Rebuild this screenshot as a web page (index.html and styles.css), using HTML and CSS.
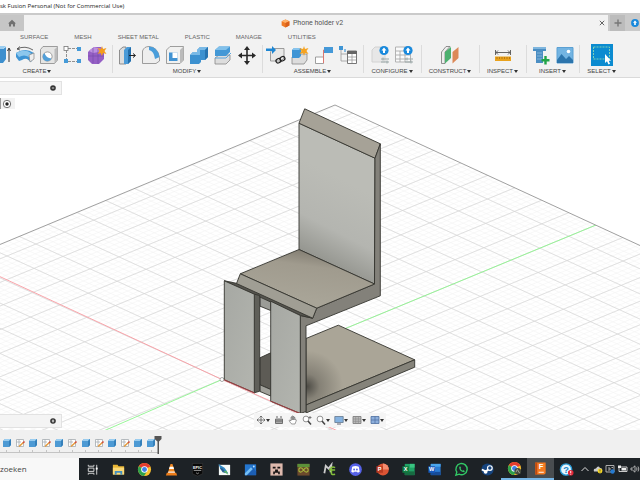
FILE: index.html
```html
<!DOCTYPE html>
<html lang="en">
<head>
<meta charset="utf-8">
<title>Fusion Personal</title>
<link rel="stylesheet" href="styles.css">
</head>
<body>
<svg class="defs" aria-hidden="true">
  <symbol id="solid" viewBox="0 0 10 10"><path d="M1 3L3 1H9V7L7 9H1Z" fill="#4d9ad4"/><path d="M1 3L3 1H9L7 3Z" fill="#9acdf0"/><path d="M7 3L9 1V7L7 9Z" fill="#3580ba"/></symbol>
  <symbol id="sketch" viewBox="0 0 10 10"><path d="M1.500 1.500H8.500V8.500H1.500ZM1.500 4H6M4 1.500V8" fill="#fff" stroke="#a5abb0" stroke-width=".8"/><path d="M4 8.500L9 4" stroke="#e39a3b" stroke-width="1.500"/><path d="M8 5L9.500 3.500" stroke="#d14b40" stroke-width="1.500"/></symbol>
  <symbol id="disc" viewBox="0 0 8 8"><circle cx="4" cy="4" r="2.800" fill="#333"/><path d="M2.800 4H5.200" stroke="#fff" stroke-width=".8"/></symbol>
  <symbol id="chrome" viewBox="0 0 16 16"><circle cx="8" cy="8" r="7" fill="#fbc02d"/><path d="M8 8L2 4.400A7 7 0 0 1 14.200 4.800Z" fill="#e53c2f"/><path d="M8 8L2 4.400A7 7 0 0 0 7.500 15L10.500 10Z" fill="#2da14c"/><circle cx="8" cy="8" r="3.500" fill="#fff"/><circle cx="8" cy="8" r="2.600" fill="#3f7fe8"/></symbol>
</svg>

<header class="titlebar">sk Fusion Personal (Not for Commercial Use)</header>

<nav class="tabbar" aria-label="Documents">
  <button class="home" aria-label="Home"><svg viewBox="0 0 10 10"><path d="M0 5.500L5 .8L10 5.500H8.700V9.500H6.200V6.500H3.800V9.500H1.300V5.500Z" fill="#707070"/></svg></button>
  <div class="doc">
    <div class="doc-name"><svg viewBox="0 0 10 10"><path d="M5 .5L9.300 2.500V7.300L5 9.500L.7 7.300V2.500Z" fill="#ef7a24"/><path d="M5 .5L9.300 2.500L5 4.500L.7 2.500Z" fill="#ffb26b"/><path d="M5 4.500L9.300 2.500V7.300L5 9.500Z" fill="#d9601a"/></svg><span>Phone holder v2</span></div>
    <button class="close" aria-label="Close"><svg viewBox="0 0 6 6"><path d="M.8 .8L5.200 5.200M5.200 .8L.8 5.200" stroke="#555" stroke-width=".9"/></svg></button>
  </div>
  <div class="tab-end">
    <button class="plus" aria-label="New"><svg viewBox="0 0 8 8"><path d="M4 .5V7.500M.5 4H7.500" stroke="#777" stroke-width="1.400"/></svg></button>
    <button class="ext" aria-label="Extensions"><svg viewBox="0 0 8 8"><circle cx="4" cy="4" r="3.900" fill="#1989dc"/><path d="M4 1.500L6 3.700H4.800V6H3.200V3.700H2Z" fill="#fff"/></svg></button>
  </div>
</nav>

<section class="ribbon">
  <div class="modes"><a href="#">SURFACE</a><a href="#">MESH</a><a href="#">SHEET METAL</a><a href="#">PLASTIC</a><a href="#">MANAGE</a><a href="#">UTILITIES</a></div>
  <div class="groups">
    <div class="group create">
      <div class="icons">
        <button aria-label="Extrude"><svg viewBox="0 0 20 20"><path d="M0 4H12L15 2V14L12 18H0Z" fill="#3d8fce"/><path d="M0 4L3 1H15L12 4Z" fill="#9acdf0"/><path d="M18 17V4M16.500 6L18 3L19.500 6" fill="none" stroke="#333"/></svg></button>
        <button aria-label="Revolve"><svg viewBox="0 0 20 20"><path d="M1 8Q10 2 19 8V12L16 17L12 14Q10 13 7 15L4 16L1 12Z" fill="#3e94d4"/><path d="M1 8Q10 3 16 8L14 12Q9 9 4 12Z" fill="#8cc7ed"/><path d="M14 10L19 8V14L15 17Z" fill="#eee" stroke="#888" stroke-width=".7"/><path d="M2 4Q10 0 18 5M2 4L5 1.500M2 4L5 5" fill="none" stroke="#444" stroke-width=".8"/></svg></button>
        <button aria-label="Hole"><svg viewBox="0 0 20 20"><path d="M1.500 4.500L4 1.500H18.500V15L15.500 18.500H1.500Z" fill="#e5e5e4" stroke="#888" stroke-width=".8"/><path d="M15.500 4.500L18.500 1.500V15L15.500 18.500Z" fill="#bbb"/><circle cx="8.500" cy="11.500" r="4.600" fill="#fff" stroke="#888" stroke-width=".8"/><path d="M5.500 8A4.600 4.600 0 1 0 12.500 13.500Q7 13 5.500 8Z" fill="#529fd8"/></svg></button>
        <button aria-label="Pattern"><svg viewBox="0 0 20 20"><path d="M5 3.500H14M3.500 5V15M5 16.500H14" stroke="#777" stroke-width=".8" stroke-dasharray="3 1"/><rect x="1" y="1.500" width="4" height="4" fill="#fff" stroke="#777" stroke-width=".8"/><path d="M14 2H18V6H14ZM14 14H18V18H14ZM1 14H5V18H1Z" fill="#459bd9"/></svg></button>
        <button aria-label="Form"><svg viewBox="0 0 20 20"><path d="M3 5L7 2H14L17 5V14L12 19H5L1 15V7Z" fill="#955fc5"/><path d="M2 6L7 2L15 4L12 7L6 8Z" fill="#bd91df"/><path d="M6 3V18M11 4V19M1 11H17" stroke="#744aa8" stroke-width=".6"/><path d="M15 1L16 4L19.500 3L17.500 6L19.500 9L16 8L15 11L13.500 8L10.500 9L12.500 6L10.500 3L14 4Z" fill="#f39c1e"/></svg></button>
      </div>
      <button class="menu">CREATE<i></i></button>
    </div>
    <div class="group modify">
      <div class="icons">
        <button aria-label="Press pull"><svg viewBox="0 0 20 20"><path d="M2.500 5L6 2H9V19H2.500Z" fill="#ddd" stroke="#777" stroke-width=".8"/><path d="M7 5L10 2H14V16L11 19H7Z" fill="#4a9bd8"/><path d="M11 5L14 2V16L11 19Z" fill="#236eab"/><path d="M12 10.500H18M16 8.500L18.500 10.500L16 12.500" fill="none" stroke="#222"/></svg></button>
        <button aria-label="Fillet"><svg viewBox="0 0 20 20"><path d="M1.500 18.500V6Q3 1.500 8 1.500Q17 2 18.500 13V16L15 18.500Z" fill="#eee" stroke="#888" stroke-width=".8"/><path d="M8 1.500Q17 2 18.500 12L14 14Q13 6 8 5Z" fill="#4a9edb"/></svg></button>
        <button aria-label="Shell"><svg viewBox="0 0 20 20"><path d="M1.500 5L5 1.500H18.500V15L15 18.500H1.500Z" fill="#f1f1f0" stroke="#888" stroke-width=".8"/><path d="M15 5L18.500 1.500V15L15 18.500Z" fill="#bbb"/><path d="M4 7.500H12.500V16H4Z" fill="#4193d3"/><path d="M7.500 7.500H12.500V13H7.500Z" fill="#fff"/></svg></button>
        <button aria-label="Combine"><svg viewBox="0 0 20 20"><path d="M1 10L4 7H8V5L11 2H19V12L16 15H12V17L10 19H1Z" fill="#3c91d0"/><path d="M1 10L4 7H8V5L11 2H19L16 5H11V10Z" fill="#79b9e6"/><path d="M16 5L19 2V12L16 15Z" fill="#2673b0"/></svg></button>
        <button aria-label="Offset face"><svg viewBox="0 0 20 20"><path d="M2 13L6 10H17V15L13 19H2Z" fill="#ddd" stroke="#888" stroke-width=".8"/><path d="M2 5L6 1.500H17V7L13 11H2Z" fill="#4398d6"/><path d="M2 5L6 1.500H17L13 5Z" fill="#82c1eb"/><path d="M2 13H13L18 8" fill="none" stroke="#5aa5dc"/></svg></button>
        <button aria-label="Move"><svg viewBox="0 0 20 20"><path d="M10 3V18M2.500 10.500H17.500" stroke="#292929" stroke-width="1.600"/><path d="M10 1L13 5H7ZM10 20L13 16H7ZM1 10.500L5 7.500V13.500ZM19 10.500L15 7.500V13.500Z" fill="#292929"/></svg></button>
      </div>
      <button class="menu">MODIFY<i></i></button>
    </div>
    <div class="group assemble">
      <div class="icons">
        <button aria-label="Insert component"><svg viewBox="0 0 20 20"><path d="M4.500 7L7 3.500H18V13L15 16H4.500Z" fill="#e8e8e7" stroke="#888" stroke-width=".8"/><path d="M0 3.500H6V1L10 5L6 9V6H0Z" fill="#1e86d2"/><rect x="10" y="14" width="5" height="4" rx="2" fill="none" stroke="#222" stroke-width="1.300" transform="rotate(-30 12 16)"/><rect x="14" y="12" width="5" height="4" rx="2" fill="none" stroke="#222" stroke-width="1.300" transform="rotate(-30 16 14)"/></svg></button>
        <button aria-label="New component"><svg viewBox="0 0 20 20"><path d="M2 12L5 9H17V15L14 19H2Z" fill="#ddd" stroke="#888" stroke-width=".8"/><path d="M2 5L4 3H11V11L9 13H2Z" fill="#3f95d5"/><path d="M2 5L4 3H11L9 5Z" fill="#87c4ed"/><path d="M14 1L15 4L18.500 3L16.500 6L18.500 9L15 8L14 11L13 8L9.500 9L11.500 6L9.500 3L13 4Z" fill="#f5a321"/></svg></button>
        <button aria-label="Joint"><svg viewBox="0 0 20 20"><path d="M1.500 12H9.500V18.500H1.500Z" fill="#fff" stroke="#888" stroke-width=".8"/><path d="M9.500 18V5H13" fill="none" stroke="#dc7770"/><path d="M10 2H19V8H10Z" fill="#4599d8"/></svg></button>
        <button aria-label="Bill of materials"><svg viewBox="0 0 20 20"><path d="M3 5V16H9M3 9H9" fill="none" stroke="#999" stroke-width=".8"/><path d="M1 1H5V5H1Z" fill="#3f95d5"/><path d="M6 4H8V7H6Z" fill="#8abbe0"/><path d="M9.500 6H18.500V18.500H9.500Z" fill="#fff" stroke="#777"/><path d="M9 6H19V9H9Z" fill="#666"/><path d="M10 12H18M10 15H18M14 9V18" stroke="#999" stroke-width=".8"/></svg></button>
      </div>
      <button class="menu">ASSEMBLE<i></i></button>
    </div>
    <div class="group">
      <div class="icons">
        <button aria-label="Configure"><svg viewBox="0 0 20 20"><path d="M2 5L5 2H15V17H2Z" fill="#e7e7e7" stroke="#d2d2d2"/><circle cx="14" cy="5.500" r="4.600" fill="#1989dc"/><path d="M14 2.500L16.500 5.500H15V8H13V5.500H11.500Z" fill="#fff"/><path d="M11 14H19M11 17H19M13 12.500V15.500M17 15.500V18.500" stroke="#9ba8a8"/></svg></button>
        <button aria-label="Table"><svg viewBox="0 0 20 20"><path d="M1.500 2H16.500V17H1.500ZM2 6H16M2 10H16M2 14H12M6 6V17M11 6V17" fill="#fafafa" stroke="#aaa" stroke-width=".9"/><circle cx="14" cy="5.500" r="4.600" fill="#1989dc"/><path d="M14 2.500L16.500 5.500H15V8H13V5.500H11.500Z" fill="#fff"/><path d="M11 14H19M11 17H19M13 12.500V15.500M17 15.500V18.500" stroke="#9ba8a8"/></svg></button>
      </div>
      <button class="menu">CONFIGURE<i></i></button>
    </div>
    <div class="group">
      <div class="icons"><button aria-label="Plane"><svg viewBox="0 0 20 20"><path d="M1.500 7L6 1.500H10L5 7V18.500H1.500Z" fill="#eee" stroke="#777" stroke-width=".8"/><path d="M5 7L11 2V13L5 18.500Z" fill="#4cb06f"/><path d="M12.500 7L18.500 2V13L12.500 18.500Z" fill="#dc8957"/></svg></button></div>
      <button class="menu">CONSTRUCT<i></i></button>
    </div>
    <div class="group">
      <div class="icons"><button aria-label="Measure"><svg viewBox="0 0 20 20"><path d="M2.500 5V10M17.500 5V10M3 7.500H17M5 5.500L3 7.500L5 9.500M15 5.500L17 7.500L15 9.500" fill="none" stroke="#555" stroke-width=".9"/><path d="M2 11.500H18V16H2Z" fill="#e9a21d"/><path d="M4 12V14M6.500 12V14M9 12V14M11.500 12V14M14 12V14M16.500 12V14" stroke="#a8690a" stroke-width=".7"/></svg></button></div>
      <button class="menu">INSPECT<i></i></button>
    </div>
    <div class="group">
      <div class="icons">
        <button aria-label="Insert fastener"><svg viewBox="0 0 20 20"><path d="M2 2H15V6H12V18H5V6H2Z" fill="#4b8ec3"/><path d="M2 2H15V4H2Z" fill="#7fb6de"/><path d="M6 8H11M6 11H11M6 14H11" stroke="#83b4d8"/><path d="M14.500 11V19.500M10.500 15.200H18.500" stroke="#20a447" stroke-width="2.400"/></svg></button>
        <button aria-label="Canvas"><svg viewBox="0 0 20 20"><path d="M2 2.500H18V18H2Z" fill="#73b4e2" stroke="#5ba0d3"/><path d="M2 15L6.500 9L11 14L14 11L18 15V18H2Z" fill="#2c75ad"/><circle cx="13.500" cy="6.500" r="1.800" fill="#fff"/></svg></button>
      </div>
      <button class="menu">INSERT<i></i></button>
    </div>
    <div class="group select">
      <div class="icons"><button class="active" aria-label="Select"><svg viewBox="0 0 22 22"><path d="M0 0H22V22H0Z" fill="#0b8bd0"/><path d="M2.500 3H18.500V15H2.500Z" fill="none" stroke="#7cd0b5" stroke-dasharray="2 1"/><path d="M14 10V19L16 17.200L17.500 20.500L19 19.800L17.700 16.700H20Z" fill="#fff"/></svg></button></div>
      <button class="menu">SELECT<i></i></button>
    </div>
  </div>
</section>

<main class="canvas">
  <svg class="scene" viewBox="0 77 640 353" preserveAspectRatio="xMidYMid slice" role="img" aria-label="Phone holder model">
    <defs>
      <clipPath id="floor"><path d="M335 104.500L-100 285.600V520H760V300.300Z"/></clipPath>
      <linearGradient id="back" x1=".58" y1=".35" x2=".42" y2="1"><stop offset="0" stop-color="#bbbcb6"/><stop offset=".5" stop-color="#b4b5b0"/><stop offset=".82" stop-color="#969791"/><stop offset="1" stop-color="#aaaba7"/></linearGradient>
      <linearGradient id="seat" x1=".6" y1="0" x2=".35" y2=".8"><stop offset="0" stop-color="#7e796e"/><stop offset=".35" stop-color="#a09b8e"/><stop offset="1" stop-color="#a8a497"/></linearGradient>
      <radialGradient id="shade" gradientUnits="userSpaceOnUse" cx="307" cy="386" r="36"><stop offset="0" stop-color="#4d4b45"/><stop offset=".35" stop-color="#858176"/><stop offset="1" stop-color="#aaa597"/></radialGradient>
      <linearGradient id="leg" x1="0" y1="0" x2="1" y2="1"><stop offset="0" stop-color="#a6a8a3"/><stop offset="1" stop-color="#b3b5af"/></linearGradient>
    </defs>
    <g clip-path="url(#floor)" fill="none">
      <path id="minor" class="minor"/>
      <path id="major" class="major"/>
      <path d="M-78 240L222 379L402 459" stroke="#f99ba1" stroke-width=".9"/>
      <path d="M596 224.500L222 379L22 466" stroke="#8df58d" stroke-width=".9"/>
    </g>
    <path d="M-100 285.600L335 104.500L760 300.300" fill="none" stroke="#888" stroke-width=".8"/>
    <circle cx="222" cy="379" r="2" fill="#fff" stroke="#888" stroke-width=".7"/>
    <g stroke="#34342f" stroke-width=".9" stroke-linejoin="round">
      <path d="M306 338L338.300 324.700L414.700 359.300L306 404.500Z" fill="url(#shade)"/>
      <path d="M306 404.500L414.700 359.300V366.700L306 412.500Z" fill="#85837a"/>
      <path d="M260 357.300L270.700 352.300V389L260 384.300Z" fill="#5d5b55"/>
      <path d="M260 384.300L270.700 389V395.500L260 391Z" fill="#a1a19b"/>
      <path d="M260 295L270.700 299V310L260 305.700Z" fill="#9b9c97"/>
      <path d="M299 122.700L375 157.700L374.500 283.500L299 249Z" fill="url(#back)"/>
      <path d="M304.700 108.300L380.300 143.300L375 157.700L299 122.700Z" fill="#a6a297"/>
      <path d="M380.300 143.300L375 157.700L374.500 283.500L316.700 307.700L312.700 317.700L300.300 315V413L306 411V325.300L380.300 295.300Z" fill="#83817a"/>
      <path d="M299 249L374.500 283.500L316.700 307.700L240.300 273.300Z" fill="url(#seat)"/>
      <path d="M224.300 280.300L240 283.500L312.700 317.700L300.300 315Z" fill="#55544e"/>
      <path d="M240.300 273.300L316.700 307.700L312.700 317.700L236.500 283Z" fill="#a09e94"/>
      <path d="M254.300 293.700L259.700 295V390.700L254.300 392.300Z" fill="#5f5f59"/>
      <path d="M224.300 280.300L254.300 293.700V392.300L224.300 379.300Z" fill="url(#leg)"/>
      <path d="M270.700 300.700L300.300 315V413L270.700 400.700Z" fill="url(#leg)"/>
      <path d="M224.300 379.300L254.300 392.300M270.700 400.700L300.300 413" stroke="#a53c40"/>
    </g>
  </svg>

  <div class="panel top"><button aria-label="Collapse browser"><svg viewBox="0 0 8 8"><use href="#disc"/></svg></button></div>
  <div class="eye"><button aria-label="Visibility"><svg viewBox="0 0 10 10"><circle cx="5" cy="5" r="3.700" fill="#fff" stroke="#666" stroke-width=".9"/><circle cx="5" cy="5" r="1.700" fill="#222"/></svg></button></div>
  <div class="panel bottom"><button aria-label="Add comment"><svg viewBox="0 0 8 8"><use href="#disc"/><path d="M4 2.500V5.500" stroke="#fff" stroke-width=".8"/></svg></button></div>

  <div class="navbar">
    <button class="drop" aria-label="Orbit"><svg viewBox="0 0 10 10"><path d="M5 1V9M1 5H9M3.500 2.500L5 1L6.500 2.500M3.500 7.500L5 9L6.500 7.500M2.500 3.500L1 5L2.500 6.500M7.500 3.500L9 5L7.500 6.500" fill="none" stroke="#666" stroke-width=".9"/></svg><i></i></button>
    <button aria-label="Look at"><svg viewBox="0 0 10 10"><path d="M1.500 4H8.500V8.500H1.500Z" fill="#aaa" stroke="#666" stroke-width=".9"/><path d="M2 2H4M6 2H8M1 6H9" stroke="#666"/></svg></button>
    <button aria-label="Pan"><svg viewBox="0 0 10 10"><path d="M3 8.500L1 5.500L2 5L3 6V2L4 2V5V1H5V5V1.500H6V5V2.500H7V5L8 4.500L8.500 5L7 9H4Z" fill="#fff" stroke="#777" stroke-width=".7"/></svg></button>
    <button aria-label="Zoom"><svg viewBox="0 0 10 10"><circle cx="4" cy="4" r="2.900" fill="#fff" stroke="#777" stroke-width=".8"/><path d="M6 6L9 9.500" stroke="#444" stroke-width="1.500"/><path d="M8 1V4M6.500 2.500H9.500" stroke="#555" stroke-width=".7"/></svg></button>
    <button class="drop" aria-label="Fit"><svg viewBox="0 0 10 10"><circle cx="4" cy="4" r="2.900" fill="#fff" stroke="#777" stroke-width=".8"/><path d="M6 6L9 9.500" stroke="#444" stroke-width="1.500"/></svg><i></i></button>
    <button class="drop" aria-label="Display"><svg viewBox="0 0 10 10"><path d="M.8 1.500H9.200V7.500H.8Z" fill="#85b2e0" stroke="#65798e" stroke-width=".8"/><path d="M3 9H7" stroke="#667"/></svg><i></i></button>
    <button class="drop" aria-label="Grid"><svg viewBox="0 0 10 10"><path d="M1 1.500H9V8.500H1Z" fill="#bbb" stroke="#777" stroke-width=".8"/><path d="M1 4H9M1 6.300H9M3.700 1.500V8.500M6.400 1.500V8.500" stroke="#888" stroke-width=".6"/></svg><i></i></button>
    <button class="drop" aria-label="Viewports"><svg viewBox="0 0 10 10"><path d="M1 1.500H9V8.500H1Z" fill="#8caedb" stroke="#4e6fa0" stroke-width=".8"/><path d="M5 1.500V8.500M1 5H9" stroke="#4e6fa0" stroke-width=".7"/></svg><i></i></button>
  </div>
</main>

<section class="timeline" aria-label="Timeline">
  <div class="steps">
    <button aria-label="Extrude 1"><svg><use href="#solid"/></svg></button><button aria-label="Sketch 2"><svg><use href="#sketch"/></svg></button>
    <button aria-label="Extrude 2"><svg><use href="#solid"/></svg></button><button aria-label="Sketch 3"><svg><use href="#sketch"/></svg></button>
    <button aria-label="Extrude 3"><svg><use href="#solid"/></svg></button><button aria-label="Sketch 4"><svg><use href="#sketch"/></svg></button>
    <button aria-label="Extrude 4"><svg><use href="#solid"/></svg></button><button aria-label="Sketch 5"><svg><use href="#sketch"/></svg></button>
    <button aria-label="Extrude 5"><svg><use href="#solid"/></svg></button><button aria-label="Sketch 6"><svg><use href="#sketch"/></svg></button>
    <button aria-label="Extrude 6"><svg><use href="#solid"/></svg></button><button aria-label="Extrude 7"><svg><use href="#solid"/></svg></button>
  </div>
  <svg class="marker" viewBox="0 0 8 18"><path d="M.5 0H7.500V3L5 5.500V18H3.500V5.500L.5 3Z" fill="#555"/></svg>
</section>

<footer class="taskbar">
  <button class="search">zoeken</button>
  <div class="apps">
    <button aria-label="Task view"><svg viewBox="0 0 16 16"><path d="M3.500 3V4.500H9.500V3M3.500 6.500H9.500V10H3.500ZM3.500 13.500V12H9.500V13.500M12.500 3V13.500" fill="none" stroke="#ddd"/><path d="M11.500 6H13.500V8H11.500Z" fill="#fff"/></svg></button>
    <button aria-label="Explorer"><svg viewBox="0 0 16 16"><path d="M2 3H7L8 4.500H14V13H2Z" fill="#e9b634"/><path d="M2 6H14V13.500H2Z" fill="#fbd976"/><path d="M4 13.500V9.500H12V13.500H10V11.500H6V13.500Z" fill="#438fc0"/></svg></button>
    <button aria-label="Chrome"><svg><use href="#chrome"/></svg></button>
    <button aria-label="VLC"><svg viewBox="0 0 16 16"><path d="M7 2H9L12 12H4Z" fill="#f28a22"/><path d="M6 5H10L10.700 7.500H5.300Z" fill="#fff"/><path d="M4.700 10H11.300L12 12H4Z" fill="#eee"/><path d="M3 11.500H13L14 14.500H2Z" fill="#ee7d18"/></svg></button>
    <button aria-label="Epic Games"><svg viewBox="0 0 16 16"><path d="M2.500 1.500H13.500V12.500L8 15L2.500 12.500Z" fill="#080808" stroke="#444" stroke-width=".5"/><text x="8" y="7.500" class="epic">EPIC</text><path d="M4 9H12M6.500 11.500L8 12.500L9.500 11.500" stroke="#bbb" stroke-width=".8" fill="none"/></svg></button>
    <button aria-label="Draw"><svg viewBox="0 0 16 16"><path d="M2 3H14V14H2Z" fill="#f5faf8"/><path d="M1.500 2L8 6L12 12L8 11L4 8Z" fill="#3189c5"/><path d="M3 6L6 11L10 12L6 7Z" fill="#285d91"/><path d="M7 10L12 13.500L10 9Z" fill="#5bb267"/></svg></button>
    <button aria-label="Photos"><svg viewBox="0 0 16 16"><path d="M2 2.500H14V14H2Z" fill="#2476ce"/><path d="M2 14L9 6Q10 5.500 11 6.500L14 10V14Z" fill="#1c5fb4"/><path d="M2 12L8.500 5.500L10.500 7.500L4 14H2Z" fill="#73bef4"/><circle cx="11.500" cy="4.800" r="1" fill="#bfe3ff"/></svg></button>
    <button aria-label="Minecraft"><svg viewBox="0 0 16 16"><path d="M1.500 1.500H14.500V14.500H1.500Z" fill="#ddb9ad"/><path d="M4 5H7V7H4ZM9 5H12V7H9ZM6.500 8H9.500V10H11.500V13H9.800V11.500H6.200V13H4.500V10H6.500Z" fill="#171313"/></svg></button>
    <button aria-label="Launcher"><svg viewBox="0 0 16 16"><path d="M1.500 2H14.500V14.500H1.500Z" fill="#6c4a2c"/><path d="M1.500 2H14.500V5.500H1.500Z" fill="#5c9139"/><path d="M8 8.500C5 4.500 3 6.500 3 8.500S5 12.500 8 8.500S13 6.500 13 8.500S11 12.500 8 8.500Z" fill="none" stroke="#a6b83c" stroke-width="1.200"/></svg></button>
    <button aria-label="MCreator"><svg viewBox="0 0 16 16"><path d="M2.500 12L4 4L7 7L10 3L9 11" fill="none" stroke="#ccc" stroke-width="1.900"/><path d="M10 5V12Q10 14 14 13M7.500 8.500H14M14 6Q10 4 9 8" fill="none" stroke="#83bd3c" stroke-width="1.700"/></svg></button>
    <button aria-label="Discord"><svg viewBox="0 0 16 16"><circle cx="8" cy="8" r="6.800" fill="#5662e8"/><path d="M4.500 5Q8 3.500 11.500 5L12.500 10.500L10.500 11.500L9.700 10.500H6.300L5.500 11.500L3.500 10.500Z" fill="#fff"/><circle cx="6.500" cy="8" r="1" fill="#5662e8"/><circle cx="9.500" cy="8" r="1" fill="#5662e8"/></svg></button>
    <button aria-label="PowerPoint"><svg viewBox="0 0 16 16"><circle cx="8.500" cy="8" r="6.300" fill="#db5434"/><path d="M8.500 1.700A6.300 6.300 0 0 1 14.800 8H8.500Z" fill="#f48c6e"/><path d="M1.500 4.500H8.500V11.500H1.500Z" fill="#b93a20"/><text x="5" y="10" class="app-letter">P</text></svg></button>
    <button aria-label="Excel"><svg viewBox="0 0 16 16"><path d="M4 2H14.500V14H4Z" fill="#20a366"/><path d="M9.500 2H14.500V6H9.500Z" fill="#39c481"/><path d="M4 10H14.500V14H4Z" fill="#176c42"/><path d="M1.500 4.500H8.500V11.500H1.500Z" fill="#107c41"/><text x="5" y="10" class="app-letter">X</text></svg></button>
    <button aria-label="Word"><svg viewBox="0 0 16 16"><path d="M4 2H14.500V14H4Z" fill="#2b7cd3"/><path d="M4 2H14.500V5H4Z" fill="#4aa5ed"/><path d="M4 10.500H14.500V14H4Z" fill="#164b96"/><path d="M1.500 4.500H8.500V11.500H1.500Z" fill="#185abd"/><text x="5" y="10" class="app-letter">W</text></svg></button>
    <button aria-label="WhatsApp"><svg viewBox="0 0 16 16"><path d="M2 14L3 10.800A6 6 0 1 1 5.500 13Z" fill="#1d2329" stroke="#32c765" stroke-width="1.500"/><path d="M5.500 5Q5.500 10.500 11 11L11.500 9.500L9.700 8.500L9 9.300Q7.500 8.500 7 7.200L7.600 6.500L6.800 4.700Z" fill="#32c765"/></svg></button>
    <button aria-label="Steam"><svg viewBox="0 0 16 16"><circle cx="8" cy="8" r="6.500" fill="#15437d"/><path d="M2 8L6 10L9 8" stroke="#fff" stroke-width="2" fill="none"/><circle cx="10.500" cy="6.500" r="2.500" fill="#15437d" stroke="#fff" stroke-width="1.300"/><circle cx="6" cy="10.500" r="2" fill="#fff"/></svg></button>
    <button class="running" aria-label="Chrome profile"><svg viewBox="0 0 16 16"><use href="#chrome"/><circle cx="11.500" cy="11" r="3.500" fill="#444b3e"/><path d="M9.500 12L11 9L13.500 13" stroke="#a5aa96" fill="none"/></svg></button>
    <button class="running current" aria-label="Fusion"><svg viewBox="0 0 16 16"><path d="M2.500 1.500H13.500V13L12 14.500H2.500Z" fill="#f47a20"/><path d="M2.500 1.500H4.500V14.500H2.500Z" fill="#bd4a12"/><text x="8.500" y="9" class="fusion">F</text><path d="M6 12H11.500" stroke="#fff"/></svg></button>
    <button aria-label="Help"><svg viewBox="0 0 16 16"><circle cx="7.500" cy="8" r="6" fill="#e7f5fc" stroke="#299bd8" stroke-width="1.500"/><text x="7.500" y="11.500" class="help">?</text><circle cx="12.500" cy="11.500" r="3" fill="#e32636"/><path d="M12.500 9.500V12M12.500 12.700V13.500" stroke="#fff"/></svg></button>
  </div>
  <div class="tray">
    <button aria-label="Show hidden"><svg viewBox="0 0 10 10"><path d="M1.500 7L5 3.500L8.500 7" fill="none" stroke="#ddd"/></svg></button>
    <button aria-label="OneDrive"><svg viewBox="0 0 10 10"><path d="M1 7.500Q0 4.500 3 4.500Q5 1 7 4Q10 4 9 7.500Z" fill="#ccc"/><circle cx="7" cy="7" r="2.400" fill="#f4d724"/><path d="M7 5.500V7.300M7 7.800V8.500" stroke="#333" stroke-width=".7"/></svg></button>
    <button aria-label="Security"><svg viewBox="0 0 10 10"><path d="M1 1.500H9V8H1ZM3 4H5V6H3M6.500 3.500H8" fill="none" stroke="#bbb" stroke-width=".9"/><circle cx="7.500" cy="7.500" r="2.200" fill="#257ad0"/></svg></button>
    <button aria-label="Battery"><svg viewBox="0 0 10 10"><path d="M1 3H9V7.500H1Z" fill="none" stroke="#ddd" stroke-width=".9"/><path d="M3.500 4H8V6.500H3.500ZM0 1.500H3V4H0Z" fill="#eee"/></svg></button>
    <button aria-label="Volume"><svg viewBox="0 0 10 10"><path d="M1 4H2.500L5 1.800V8.200L2.500 6H1ZM6.500 3.500Q7.500 5 6.500 6.500M8 2.500Q9.700 5 8 7.500" fill="none" stroke="#ccc" stroke-width=".8"/></svg></button>
  </div>
</footer>
<script src="grid.js"></script>
</body>
</html>
```
FILE: styles.css
```css
* { box-sizing: border-box; }
body {
  margin: 0;
  min-height: 100vh;
  display: flex;
  flex-direction: column;
  overflow: hidden;
  background: #fff;
  color: #555;
  font: 6px/8px "Liberation Sans", Arial, sans-serif;
}
button {
  display: flex;
  align-items: center;
  justify-content: center;
  margin: 0;
  padding: 0;
  border: 0;
  background: none;
  color: inherit;
  font: inherit;
}
svg { display: block; flex: none; }
.defs { position: absolute; width: 0; height: 0; }
i {
  border: 2px solid transparent;
  border-top: 3px solid #333;
  border-bottom: 0;
  margin-left: 1px;
}

.titlebar {
  height: 13px;
  color: #222;
  font: 6px/13px "Open Sans", sans-serif;
  white-space: nowrap;
}

.tabbar {
  display: flex;
  height: 18px;
  border-top: 2px solid #cacaca;
  background: #f2f2f2;
}
.home { width: 24px; background: #c6c6c6; }
.home svg { width: 8px; height: 8px; }
.doc { flex: 1; display: flex; }
.doc-name {
  flex: 1;
  display: flex;
  align-items: center;
  justify-content: center;
  gap: 3px;
  padding-left: 4px;
  font: 7px/16px Roboto, sans-serif;
}
.doc-name svg { width: 9px; height: 9px; }
.close { width: 12px; }
.close svg { width: 6px; height: 6px; }
.tab-end { display: flex; gap: 6px; width: 32px; padding-left: 2px; background: #cacaca; }
.plus { width: 15px; background: #bcbcbc; }
.plus svg { width: 8px; height: 8px; }
.ext svg { width: 8px; height: 8px; }

.ribbon { background: #f2f2f2; border-bottom: 1px solid #dadada; }
.modes { display: flex; gap: 26px; padding-left: 20px; line-height: 12px; }
.modes a { color: #666; text-decoration: none; white-space: nowrap; }
.groups {
  display: grid;
  grid-template-columns:
    minmax(0, 112fr) minmax(0, 150fr) minmax(0, 101fr) minmax(0, 58fr) minmax(0, 58fr)
    minmax(0, 47fr) minmax(0, 53fr) minmax(0, 45fr) minmax(0, 16fr);
  padding: 1px 0;
}
.group { position: relative; }
.group + .group::before {
  content: "";
  position: absolute;
  left: 0;
  top: 1px;
  bottom: 3px;
  border-left: 1px solid #dcdcdc;
}
.icons { display: flex; justify-content: center; gap: 4px; height: 22px; align-items: center; }
.icons svg { width: 20px; height: 20px; }
.icons .active svg { width: 22px; height: 22px; }
.create .icons { justify-content: flex-end; padding-right: 5px; }
.create .menu { padding-right: 38px; }
.assemble .icons { padding-right: 1px; }
.menu { width: 100%; height: 10px; color: #444; }

.canvas { position: relative; flex: 1; min-height: 0; overflow: hidden; background: #fff; }
.scene { position: absolute; width: 100%; height: 100%; }
.minor { stroke: #f3f3f3; stroke-width: 0.6; }
.major { stroke: #d6d6d6; stroke-width: 0.7; }
.panel {
  position: absolute;
  left: 0;
  width: 62px;
  height: 14px;
  display: flex;
  justify-content: flex-end;
  padding-right: 4px;
  background: #f4f4f4;
  border: 1px solid #e2e2e2;
  border-left: 0;
}
.panel svg { width: 8px; height: 8px; }
.top { top: 3px; }
.bottom { bottom: 2px; }
.eye {
  position: absolute;
  left: 0;
  top: 20px;
  width: 15px;
  height: 11px;
  display: flex;
  justify-content: flex-end;
  padding-right: 3px;
  background: #f2f2f2;
  border-left: 1px solid #999;
}
.eye svg { width: 10px; height: 10px; }
.navbar {
  position: absolute;
  left: 50%;
  bottom: 3px;
  transform: translateX(-50%);
  display: flex;
  gap: 4px;
  padding: 2px;
  background: #f5f5f5;
}
.navbar svg { width: 10px; height: 10px; }
.navbar i { margin-left: 0; }

.timeline { position: relative; display: flex; height: 28px; padding-top: 6px; background: #f0f0f0; }
.steps {
  display: grid;
  grid-template-columns: repeat(12, 1fr);
  width: 158px;
  height: 17px;
  border-bottom: 1px solid #c4c4c4;
}
.steps button { flex-direction: column; height: 16px; gap: 2px; justify-content: flex-end; }
.steps button::after { content: ""; height: 2px; border-left: 1px solid #c4c4c4; }
.steps svg { width: 10px; height: 10px; }
.marker { width: 8px; height: 18px; margin-left: -4px; z-index: 1; }

.taskbar {
  display: grid;
  grid-template-columns: 79fr 501fr 60fr;
  height: 22px;
  background: #1d2226;
}
.search {
  justify-content: flex-start;
  background: #f8f8f8;
  color: #444;
  font: 8px/22px "Open Sans", sans-serif;
}
.apps { display: grid; grid-template-columns: repeat(19, 1fr); }
.apps svg { width: 15px; height: 15px; }
.running { border-bottom: 2px solid #76b5e6; }
.current { background: #494d50; }
.tray { display: flex; justify-content: space-between; }
.tray svg { width: 10px; height: 10px; }
.epic { font: bold 4px "Liberation Sans", sans-serif; fill: #fff; text-anchor: middle; }
.app-letter { font: bold 6px "Liberation Sans", sans-serif; fill: #fff; text-anchor: middle; }
.fusion { font: bold 8px "Liberation Sans", sans-serif; fill: #fff; text-anchor: middle; }
.help { font: bold 10px "Liberation Sans", sans-serif; fill: #1a83c7; text-anchor: middle; }
```
FILE: grid.js
```js
// Floor grid: one cell spans u along the red axis and v along the green axis.
const origin = [222, 379];
const u = [27.1, 12.4];
const v = [28.9, -11.94];

function line(point, dir) {
  const a = [point[0] - dir[0] * 30, point[1] - dir[1] * 30];
  const b = [point[0] + dir[0] * 30, point[1] + dir[1] * 30];
  return `M${a[0]} ${a[1]}L${b[0]} ${b[1]}`;
}

function grid(step) {
  let d = "";
  for (let i = -120; i <= 120; i += step) {
    const k = i / 5;
    d += line([origin[0] + u[0] * k, origin[1] + u[1] * k], v);
    d += line([origin[0] + v[0] * k, origin[1] + v[1] * k], u);
  }
  return d;
}

document.getElementById("minor").setAttribute("d", grid(1));
document.getElementById("major").setAttribute("d", grid(5));
```
